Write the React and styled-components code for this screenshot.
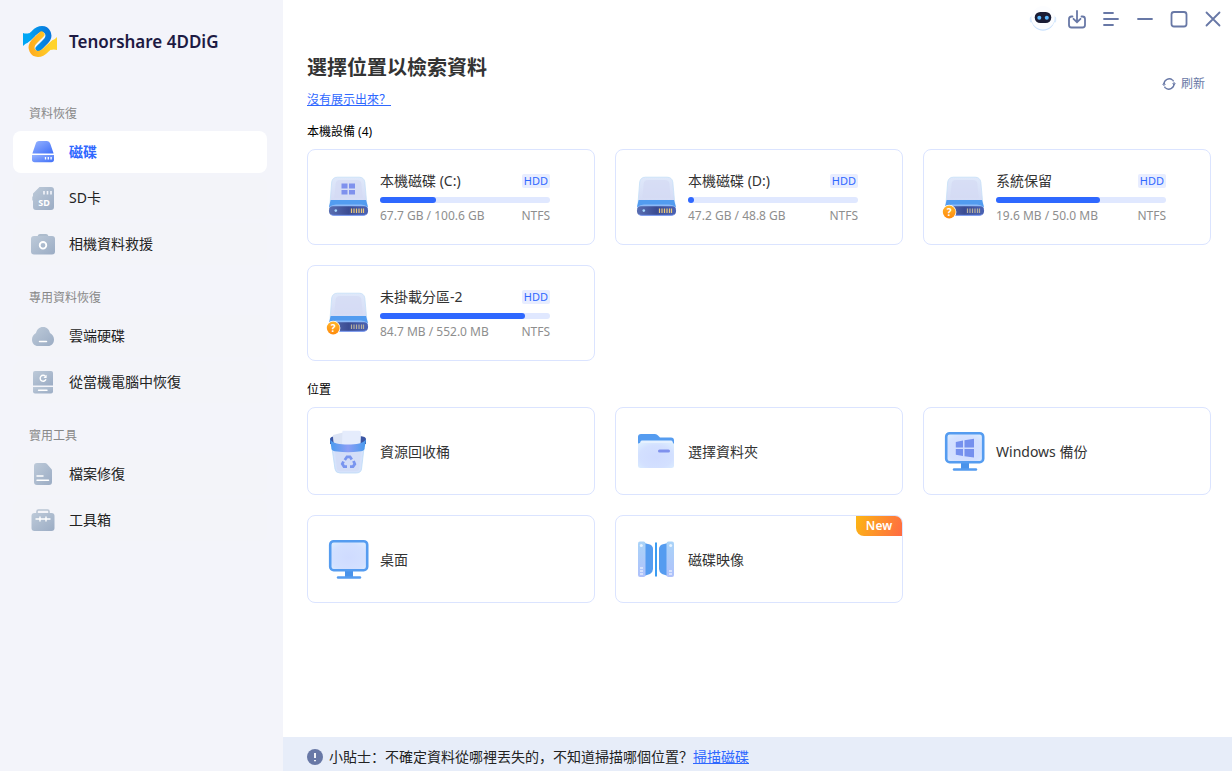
import styled, { createGlobalStyle } from 'styled-components'

const GlobalStyle = createGlobalStyle`
  * {
    box-sizing: border-box;
  }
  body {
    margin: 0;
    background-color: white;
    color: #222222;
    font-family: 'Noto Sans', 'Noto Sans CJK SC', sans-serif;
    font-size: 14px;
  }
  button {
    font-family: inherit;
    cursor: pointer;
  }
`

const Layout = styled.div`
  display: flex;
  min-height: 100vh;
`

const Sidebar = styled.aside`
  flex: 0 0 283px;
  padding: 0 16px 16px 13px;
  background-color: #f3f4fa;
`

const Brand = styled.div`
  display: flex;
  align-items: center;
  gap: 12px;
  height: 82px;
  margin-bottom: 13px;
  padding-left: 10px;
`

const BrandName = styled.span`
  font-size: 17px;
  font-weight: 600;
  color: #1d1a43;
`

const NavGroup = styled.nav`
  display: flex;
  flex-direction: column;
  gap: 4px;
  margin-bottom: 14px;
`

const NavTitle = styled.h2`
  margin: 0 0 -4px;
  padding: 2px 0 0 16px;
  line-height: 34px;
  font-size: 12px;
  font-weight: 400;
  color: #888888;
`

const NavItem = styled.a`
  display: flex;
  align-items: center;
  gap: 14px;
  height: 42px;
  padding-left: 18px;
  border-radius: 8px;
  text-decoration: none;
  color: ${({ $active }) => ($active ? '#2f68ff' : '#222222')};
  font-weight: ${({ $active }) => ($active ? 600 : 400)};
  background-color: ${({ $active }) => ($active ? 'white' : '#f3f4f9')};
`

const NavLabel = styled.span`
  padding-bottom: 2px;
`

const Main = styled.main`
  flex: 1;
  display: flex;
  flex-direction: column;
  min-width: 0;
`

const TitleBar = styled.div`
  display: flex;
  justify-content: flex-end;
  height: 38px;
  padding-right: 2px;
`

const WindowButton = styled.button`
  display: flex;
  align-items: center;
  justify-content: center;
  width: 34px;
  padding: 0;
  border: none;
  background: none;
  color: #6878a6;
`

const Content = styled.div`
  flex: 1;
  padding: 15px 21px 20px 24px;
`

const PageHead = styled.header`
  display: flex;
  justify-content: space-between;
  align-items: flex-start;
  margin-bottom: 12px;
`

const PageTitle = styled.h1`
  margin: 0 0 7px;
  line-height: 30px;
  font-size: 20px;
  font-weight: 700;
  color: #333333;
`

const HelpLink = styled.a`
  display: block;
  line-height: 20px;
  font-size: 12px;
  color: #2f68ff;
`

const RefreshButton = styled.button`
  display: flex;
  align-items: center;
  gap: 5px;
  margin-top: 21px;
  padding: 0 6px;
  border: none;
  background: none;
  line-height: 20px;
  font-size: 12px;
  color: #6878a6;
`

const Section = styled.section`
  margin-bottom: 19px;
`

const SectionTitle = styled.h2`
  margin: 0 0 7px;
  line-height: 20px;
  font-size: 12px;
  font-weight: 400;
  color: black;
`

const CardGrid = styled.div`
  display: grid;
  grid-template-columns: repeat(3, 1fr);
  gap: 20px;
`

const Card = styled.button`
  position: relative;
  display: flex;
  align-items: center;
  gap: 10px;
  height: ${({ $tall }) => ($tall ? '96px' : '88px')};
  padding: 0 20px;
  border: 1px solid #dbe4ff;
  border-radius: 8px;
  background-color: white;
  text-align: left;
  font-size: 14px;
  color: #333333;
`

const DiskInfo = styled.div`
  width: 170px;
`

const InfoRow = styled.div`
  display: flex;
  align-items: center;
  justify-content: space-between;
  line-height: 28px;
`

const Details = styled(InfoRow)`
  margin-top: 2px;
  line-height: 22px;
  font-size: 12px;
  color: #8e8e8e;
`

const TypeTag = styled.span`
  padding: 0 2px;
  border-radius: 2px;
  background-color: #e8edff;
  line-height: 14px;
  font-size: 11px;
  color: #2f68ff;
`

const Track = styled.div`
  height: 6px;
  margin-top: 2px;
  border-radius: 3px;
  background-color: #e0e8ff;
`

const Fill = styled.div`
  min-width: 6px;
  height: 6px;
  border-radius: 3px;
  background-color: #2f68ff;
`

const NewTag = styled.span`
  position: absolute;
  top: 0;
  right: 0;
  width: 46px;
  border-radius: 0 7px 0 8px;
  background: linear-gradient(110deg, #fcb614, #ff6a43);
  line-height: 20px;
  text-align: center;
  font-size: 12px;
  font-weight: 600;
  color: white;
`

const TipBar = styled.footer`
  display: flex;
  align-items: center;
  gap: 6px;
  min-height: 34px;
  padding: 6px 24px 0;
  background-color: #e7edf9;
  line-height: 28px;
`

const TipLink = styled.a`
  color: #2f68ff;
`

const CardSvg = styled.svg`
  flex: none;
  width: 42px;
  height: 42px;
  overflow: visible;
`

function Gradients() {
  return (
    <svg width="0" height="0" style={{ position: 'absolute' }} aria-hidden="true">
      <defs>
        <linearGradient id="gray" x1="0" y1="0" x2="1" y2="1">
          <stop offset="0" stopColor="#bdcad9" />
          <stop offset="1" stopColor="#9bacc4" />
        </linearGradient>
        <linearGradient id="navBlue" x1="0" y1="0" x2="1" y2="1">
          <stop offset="0" stopColor="#98b4ff" />
          <stop offset="1" stopColor="#3f6ff8" />
        </linearGradient>
        <linearGradient id="logoBlue" x1="0" y1="0" x2="1" y2="0">
          <stop offset="0" stopColor="#00a8f5" />
          <stop offset="1" stopColor="#0878dc" />
        </linearGradient>
        <linearGradient id="logoYellow" x1="1" y1="0" x2="0" y2="0">
          <stop offset="0" stopColor="#ffae1f" />
          <stop offset="1" stopColor="#ffd52c" />
        </linearGradient>
        <linearGradient id="diskTop" x1="0" y1="0" x2="0" y2="1">
          <stop offset="0" stopColor="#dfe8fa" />
          <stop offset="1" stopColor="#d2d9f4" />
        </linearGradient>
        <linearGradient id="diskBase" x1="0" y1="0" x2="1" y2="0">
          <stop offset="0" stopColor="#5a6fb3" />
          <stop offset="0.5" stopColor="#3b4c92" />
          <stop offset="1" stopColor="#4b63b4" />
        </linearGradient>
        <linearGradient id="band" x1="0" y1="0" x2="1" y2="0">
          <stop offset="0" stopColor="#489bee" />
          <stop offset="0.5" stopColor="#8b9ef5" />
          <stop offset="1" stopColor="#489bee" />
        </linearGradient>
        <linearGradient id="orange" x1="0" y1="0" x2="0" y2="1">
          <stop offset="0" stopColor="#ffb52b" />
          <stop offset="1" stopColor="#ff8a0c" />
        </linearGradient>
        <radialGradient id="screen" cx="0.5" cy="0.55" r="0.7">
          <stop offset="0" stopColor="#cfdbff" />
          <stop offset="0.65" stopColor="#d3e0ff" />
          <stop offset="1" stopColor="#dceeff" />
        </radialGradient>
        <linearGradient id="half" x1="0" y1="0" x2="0" y2="1">
          <stop offset="0" stopColor="#a9d3f8" />
          <stop offset="1" stopColor="#afc1fb" />
        </linearGradient>
      </defs>
    </svg>
  )
}

function LogoHalf({ id, color }) {
  return (
    <>
      <path
        d="M3 13.800C6 12.500 8.500 9.500 11 7C14 3.800 17 3 19 3C24.500 3 26.800 9 24.500 13C23.500 15 19 19 15.500 22.500"
        fill="none"
        stroke={`url(#${id})`}
        strokeWidth="6"
        strokeLinecap="round"
      />
      <path d="M0 7Q3 8.200 6.500 7L8 12L5 16.500Q2 17.500 0 20Z" fill={color} />
    </>
  )
}

function Logo() {
  return (
    <svg width="34" height="31" viewBox="0 0 34 31">
      <LogoHalf id="logoBlue" color="#00a6f4" />
      <g transform="rotate(180 17 15.500)">
        <LogoHalf id="logoYellow" color="#ffd32b" />
      </g>
    </svg>
  )
}

function DriveIcon() {
  return (
    <svg width="24" height="24" viewBox="0 0 24 24">
      <path d="M4.700 3.800Q5.400 1 8 1H16Q18.600 1 19.300 3.800L22.600 13.600H1.400Z" fill="url(#navBlue)" />
      <path d="M1 15H23V19.500Q23 22.200 20.300 22.200H3.700Q1 22.200 1 19.500Z" fill="url(#navBlue)" />
      <path d="M14.500 17V19.600M17.300 17V19.600M20.100 17V19.600" stroke="white" strokeWidth="1.300" />
    </svg>
  )
}

const IconLabel = styled.text`
  font-family: 'Noto Sans', sans-serif;
  font-size: ${({ $size }) => $size}px;
  font-weight: 700;
  fill: white;
  text-anchor: middle;
`

function SdIcon() {
  return (
    <svg width="24" height="24" viewBox="0 0 24 24">
      <path
        d="M8.500 1H20Q23 1 23 4V21Q23 24 20 24H5Q2 24 2 21V15L1.300 14V11L2 10V7.500Z"
        fill="url(#gray)"
      />
      <path d="M13 5V8.500M16.500 5V8.500M20 5V8.500" stroke="#f3f4fa" strokeWidth="1.600" />
      <IconLabel x="13" y="20" $size={9}>
        SD
      </IconLabel>
    </svg>
  )
}

function CameraIcon() {
  return (
    <svg width="24" height="24" viewBox="0 0 24 24">
      <path d="M6 5L7.500 2.500Q8 2 9 2H15Q16 2 16.500 2.500L18 5Z" fill="#adbccd" />
      <rect x="0" y="4" width="24" height="18.500" rx="3" fill="url(#gray)" />
      <circle cx="12" cy="13.300" r="3.300" fill="none" stroke="white" strokeWidth="1.800" />
    </svg>
  )
}

function CloudIcon() {
  return (
    <svg width="24" height="24" viewBox="0 0 24 24">
      <path
        d="M12 3C16 3 18 5.500 19 9C21.500 10.500 23 12.500 23 15.500C23 19.500 20.500 22 17 22H7C3.500 22 1 19.500 1 15.500C1 12.500 2.500 10.500 5 9C6 5.500 8 3 12 3Z"
        fill="url(#gray)"
      />
      <path d="M8.500 17.500H15.500" stroke="white" strokeWidth="1.500" strokeLinecap="round" />
    </svg>
  )
}

function CrashIcon() {
  return (
    <svg width="24" height="24" viewBox="0 0 24 24">
      <path d="M2 3Q2 1 4 1H20Q22 1 22 3V15.500H2Z" fill="url(#gray)" />
      <path d="M2 17H22V21.500Q22 23.500 20 23.500H4Q2 23.500 2 21.500Z" fill="url(#gray)" />
      <path d="M7.500 20.200H16" stroke="white" strokeWidth="1.400" strokeLinecap="round" />
      <path d="M14.400 6.200A3 3 0 1 0 15 9.200" fill="none" stroke="white" strokeWidth="1.400" />
      <path d="M15.600 4.800V8H12.500Z" fill="white" />
    </svg>
  )
}

function FileIcon() {
  return (
    <svg width="24" height="24" viewBox="0 0 24 24">
      <path
        d="M6 1H14Q15 1 15.800 1.800L20.200 6.700Q21 7.500 21 8.500V20Q21 23 18 23H6Q3 23 3 20V4Q3 1 6 1Z"
        fill="url(#gray)"
      />
      <path d="M6 14H12M6 18.200H17.500" stroke="white" strokeWidth="1.500" strokeLinecap="round" />
    </svg>
  )
}

function ToolboxIcon() {
  return (
    <svg width="24" height="24" viewBox="0 0 24 24">
      <path d="M6 6V3.500Q6 2 7.500 2H16.500Q18 2 18 3.500V6" fill="none" stroke="#b9c5d4" strokeWidth="1.600" />
      <rect x="0.500" y="5" width="23" height="18" rx="3" fill="url(#gray)" />
      <path
        d="M5 11H19M9 9V13M15 9V13"
        stroke="white"
        strokeWidth="1.400"
        strokeLinecap="round"
      />
    </svg>
  )
}

function DiskIcon({ windows, unknown }) {
  return (
    <CardSvg viewBox="0 0 42 42">
      <path
        d="M3.700 6Q4.500 1.200 9.500 1.200H31Q36 1.200 36.800 6L39 30H1.800Z"
        fill="url(#diskTop)"
        stroke="#c5e0f8"
        strokeWidth="0.800"
      />
      <path d="M7.500 8Q8 4 12 4H29Q33 4 33.500 8L34.500 22H6.500Z" fill="#d4daf4" opacity="0.7" />
      <path d="M2.600 24H38L40 31H1Z" fill="#529cf0" />
      <path d="M1 31Q4 28.500 8 28.500H33Q37 28.500 40 31V33H1Z" fill="#a5c6fa" opacity="0.7" />
      <rect x="1" y="30.200" width="39" height="9" rx="4" fill="url(#diskBase)" />
      <path d="M3 38.500Q4 39.300 6 39.300H35Q37 39.300 38 38.500" stroke="#6f91ef" fill="none" />
      <path
        d="M23.500 32.500V37M26 32.500V37M28.500 32.500V37M31 32.500V37M33.500 32.500V37M35.500 32.500V37"
        stroke={unknown ? '#b6af9e' : '#ecc879'}
        strokeWidth="1.200"
      />
      {!unknown && <circle cx="7.800" cy="34.600" r="1.300" fill="#a6d9ff" />}
      {windows && (
        <path
          d="M13.500 7.500H19.500V12.500H13.500ZM21 7.500H27V12.500H21ZM13.500 14H19.500V18.500H13.500ZM21 14H27V18.500H21Z"
          fill="#7f91ed"
        />
      )}
      {unknown && (
        <>
          <circle cx="5.200" cy="36" r="7.200" fill="white" />
          <circle cx="5.200" cy="36" r="6.400" fill="url(#orange)" />
          <IconLabel x="5.200" y="39.800" $size={10}>
            ?
          </IconLabel>
        </>
      )}
    </CardSvg>
  )
}

function BinIcon() {
  return (
    <CardSvg viewBox="0 0 42 42">
      <path d="M2 9Q2 6.500 8 6H32Q38 6.500 38 9V14H2Z" fill="#3b56a4" />
      <path d="M5 5L15 2.500V15H6.500Q5 12 5 5Z" fill="#dce4f5" />
      <path d="M14.500 0.800H31Q33 0.800 33 3L32.500 15H14Z" fill="#e5ecfc" />
      <path d="M4 18H36L33.500 39Q33 43 28 43H12Q7.500 43 7 39Z" fill="#d6e2fb" stroke="#bcdcf8" strokeWidth="0.800" />
      <path d="M7 22H33L31 39Q30.500 41 28 41H12Q9.500 41 9 39Z" fill="#d1daf5" opacity="0.6" />
      <path
        d="M2 9C4 13.500 12 14.500 20 14.500C28 14.500 36 13.500 38 9L36.500 19Q36 21 31 21.500Q20 23 9 21.500Q4 21 3.500 19Z"
        fill="url(#band)"
      />
      <g fill="none" stroke="#7995ef" strokeWidth="2.800">
        <path d="M16.800 30L19 26.800H22L23.800 29.500" />
        <path d="M25.500 31L26.800 34L25 36.600H22" />
        <path d="M19 36.600H16L14.300 34L15.500 31.500" />
      </g>
    </CardSvg>
  )
}

function FolderIcon() {
  return (
    <CardSvg viewBox="0 0 42 42">
      <path d="M2 7Q2 4 5 4H19Q21 4 22 5.500L24 7.500H35Q38 7.500 38 10.500V20H2Z" fill="#559cf0" />
      <path d="M4 14Q4 10.500 6 10.500H35Q37 10.500 37 14V20H4Z" fill="#e6f1ff" />
      <path d="M2 14Q2 13 4 13H36Q38 13 38 14V35.500Q38 38 35.500 38H4.500Q2 38 2 35.500Z" fill="url(#screen)" />
      <path d="M23.500 21H32.500" stroke="#7f91ed" strokeWidth="3" strokeLinecap="round" />
    </CardSvg>
  )
}

function MonitorIcon({ windows }) {
  return (
    <CardSvg viewBox="0 0 42 42">
      <path d="M17 33H25V39H17Z" fill="#4a93ea" />
      <path d="M10 39.500H32" stroke="#559cf0" strokeWidth="2.400" strokeLinecap="round" />
      <rect x="2.200" y="3.200" width="37" height="29" rx="3.500" fill="url(#screen)" stroke="#559cf0" strokeWidth="2.600" />
      {windows && (
        <path
          d="M11.800 12L19 10.600V17.500H11.800ZM20.500 10.300L30 8.800V17.500H20.500ZM11.800 19H19V26L11.800 24.800ZM20.500 19H30V27.500L20.500 26.200Z"
          fill="#7590ee"
        />
      )}
    </CardSvg>
  )
}

function DiskImageIcon() {
  return (
    <CardSvg viewBox="0 0 42 42">
      <path d="M8 5L14 6.500Q17 8 17 11V31Q17 34 14 36L8 38Z" fill="#559cf0" />
      <rect x="2" y="3.500" width="7.500" height="35.500" rx="2" fill="url(#half)" />
      <path d="M20 4.500V38.500" stroke="#3a9cf2" strokeWidth="2" />
      <path d="M32 5L26 6.500Q23 8 23 11V31Q23 34 26 36L32 38Z" fill="#559cf0" />
      <rect x="30.500" y="3.500" width="7.500" height="35.500" rx="2" fill="url(#half)" />
      <circle cx="5.300" cy="7.500" r="1.500" fill="#e6f3ff" />
      <circle cx="34.700" cy="7.500" r="1.500" fill="#e6f3ff" />
      <path
        d="M4 30H7M4 33H7M4 36H7M33 33H36M33 36H36"
        stroke="white"
        strokeWidth="1.200"
      />
    </CardSvg>
  )
}

function RobotIcon() {
  return (
    <svg width="28" height="28" viewBox="0 0 28 28">
      <rect x="0.800" y="11.500" width="3" height="6" rx="1.500" fill="#d9eafd" />
      <rect x="24.200" y="11.500" width="3" height="6" rx="1.500" fill="#d9eafd" />
      <circle cx="14" cy="14" r="11.700" fill="#cbe2fd" />
      <circle cx="14" cy="12.800" r="11.700" fill="#fcfdff" />
      <rect x="5.700" y="7" width="16.600" height="11" rx="5.500" fill="#1b1d35" />
      <circle cx="10.300" cy="12.800" r="2" fill="#5bb8ff" />
      <circle cx="17.800" cy="12.800" r="2" fill="#5bb8ff" />
    </svg>
  )
}

const windowButtons = [
  { label: '助手', icon: <RobotIcon /> },
  {
    label: '匯入',
    path: 'M5.500 7.500H4.500Q2 7.500 2 10V16Q2 18.500 4.500 18.500H15.500Q18 18.500 18 16V10Q18 7.500 15.500 7.500H14.500M10 2V13M6.500 9.800L10 13.200L13.500 9.800',
  },
  { label: '選單', path: 'M3 4H12M3 10H17M3 16H12' },
  { label: '最小化', path: 'M3 10H17' },
  {
    label: '最大化',
    path: 'M5 3H15Q17.500 3 17.500 5.500V15Q17.500 17.500 15 17.500H5Q2.500 17.500 2.500 15V5.500Q2.500 3 5 3Z',
  },
  { label: '關閉', path: 'M3.500 3.500L16.500 16.500M16.500 3.500L3.500 16.500' },
]

const navGroups = [
  {
    title: '資料恢復',
    items: [
      { label: '磁碟', icon: <DriveIcon />, active: true },
      { label: 'SD卡', icon: <SdIcon /> },
      { label: '相機資料救援', icon: <CameraIcon /> },
    ],
  },
  {
    title: '專用資料恢復',
    items: [
      { label: '雲端硬碟', icon: <CloudIcon /> },
      { label: '從當機電腦中恢復', icon: <CrashIcon /> },
    ],
  },
  {
    title: '實用工具',
    items: [
      { label: '檔案修復', icon: <FileIcon /> },
      { label: '工具箱', icon: <ToolboxIcon /> },
    ],
  },
]

const disks = [
  { name: '本機磁碟 (C:)', size: '67.7 GB / 100.6 GB', used: 33, windows: true },
  { name: '本機磁碟 (D:)', size: '47.2 GB / 48.8 GB', used: 3 },
  { name: '系統保留', size: '19.6 MB / 50.0 MB', used: 61, unknown: true },
  { name: '未掛載分區-2', size: '84.7 MB / 552.0 MB', used: 85, unknown: true },
]

const locations = [
  { name: '資源回收桶', icon: <BinIcon /> },
  { name: '選擇資料夾', icon: <FolderIcon /> },
  { name: 'Windows 備份', icon: <MonitorIcon windows /> },
  { name: '桌面', icon: <MonitorIcon /> },
  { name: '磁碟映像', icon: <DiskImageIcon />, isNew: true },
]

function DiskCard({ disk }) {
  return (
    <Card $tall>
      <DiskIcon windows={disk.windows} unknown={disk.unknown} />
      <DiskInfo>
        <InfoRow>
          {disk.name}
          <TypeTag>HDD</TypeTag>
        </InfoRow>
        <Track>
          <Fill style={{ width: `${disk.used}%` }} />
        </Track>
        <Details>
          <span>{disk.size}</span>
          <span>NTFS</span>
        </Details>
      </DiskInfo>
    </Card>
  )
}

function App() {
  return (
    <Layout>
      <GlobalStyle />
      <Gradients />
      <Sidebar>
        <Brand>
          <Logo />
          <BrandName>Tenorshare 4DDiG</BrandName>
        </Brand>
        {navGroups.map((group) => (
          <NavGroup key={group.title}>
            <NavTitle>{group.title}</NavTitle>
            {group.items.map((item) => (
              <NavItem key={item.label} href="#" $active={item.active}>
                {item.icon}
                <NavLabel>{item.label}</NavLabel>
              </NavItem>
            ))}
          </NavGroup>
        ))}
      </Sidebar>
      <Main>
        <TitleBar>
          {windowButtons.map(({ label, icon, path }) => (
            <WindowButton key={label} aria-label={label}>
              {icon || (
                <svg width="20" height="20" viewBox="0 0 20 20" fill="none">
                  <path d={path} stroke="currentColor" strokeWidth="1.800" strokeLinecap="round" />
                </svg>
              )}
            </WindowButton>
          ))}
        </TitleBar>
        <Content>
          <PageHead>
            <div>
              <PageTitle>選擇位置以檢索資料</PageTitle>
              <HelpLink href="#">沒有展示出來？</HelpLink>
            </div>
            <RefreshButton>
              <svg width="14" height="14" viewBox="0 0 14 14" fill="none">
                <path
                  d="M2 7A5.200 5.200 0 0 1 10.500 3M12 7A5.200 5.200 0 0 1 3.500 11"
                  stroke="currentColor"
                  strokeWidth="1.300"
                />
                <path d="M10.500 3Q12 4.500 12 6M3.500 11Q2 9.500 2 8" stroke="currentColor" strokeWidth="1.300" strokeDasharray="1.500 1" />
                <path d="M0 7.800L2 5.500L4 7.800ZM10 6.200L12 8.500L14 6.200Z" fill="currentColor" />
              </svg>
              刷新
            </RefreshButton>
          </PageHead>
          <Section>
            <SectionTitle>本機設備 (4)</SectionTitle>
            <CardGrid>
              {disks.map((disk) => (
                <DiskCard key={disk.name} disk={disk} />
              ))}
            </CardGrid>
          </Section>
          <Section>
            <SectionTitle>位置</SectionTitle>
            <CardGrid>
              {locations.map((location) => (
                <Card key={location.name}>
                  {location.icon}
                  {location.name}
                  {location.isNew && <NewTag>New</NewTag>}
                </Card>
              ))}
            </CardGrid>
          </Section>
        </Content>
        <TipBar>
          <svg width="16" height="16" viewBox="0 0 16 16">
            <circle cx="8" cy="8" r="8" fill="#6878a6" />
            <path d="M8 4V9M8 11V12.200" stroke="white" strokeWidth="1.800" />
          </svg>
          <span>
            小貼士：不確定資料從哪裡丟失的，不知道掃描哪個位置？<TipLink href="#">掃描磁碟</TipLink>
          </span>
        </TipBar>
      </Main>
    </Layout>
  )
}

export default App
